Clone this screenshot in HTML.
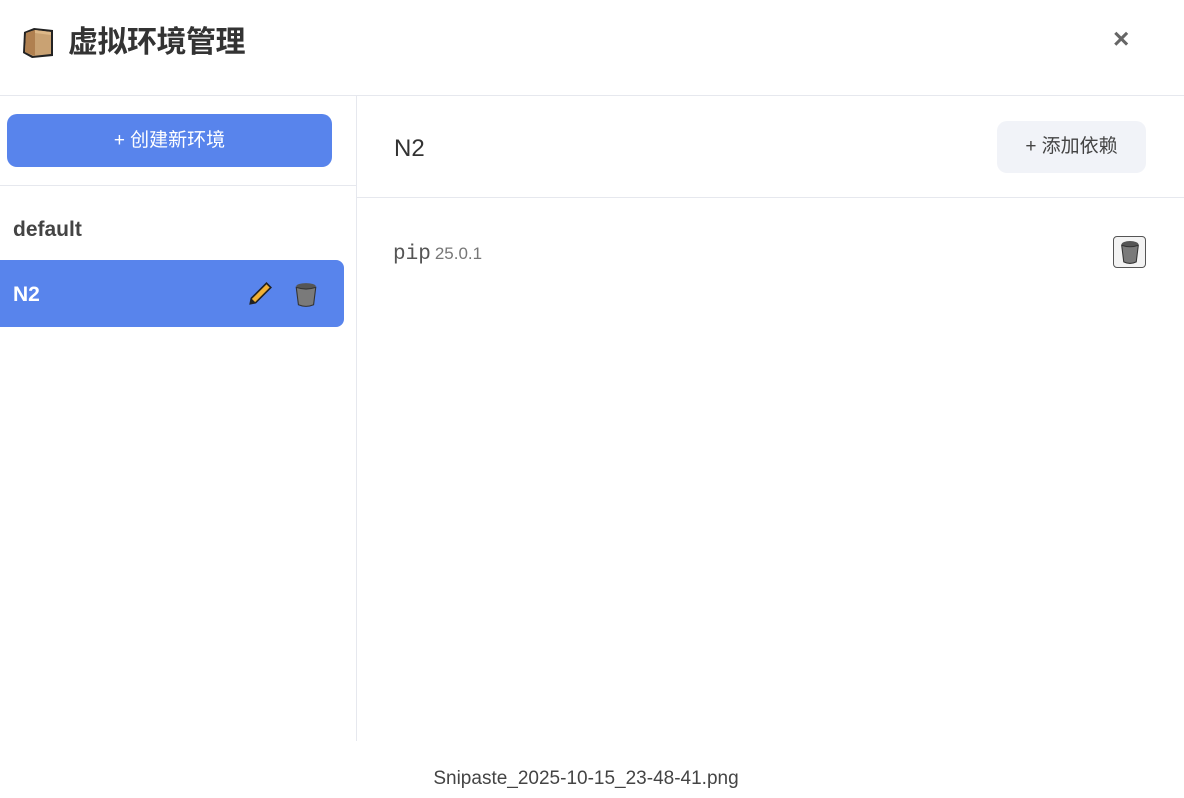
<!DOCTYPE html>
<html><head><meta charset="utf-8"><style>
*{box-sizing:border-box;margin:0;padding:0}
body{width:1184px;height:798px;background:#fff;position:relative;overflow:hidden;font-family:"Liberation Sans","Noto Sans CJK SC",sans-serif;color:#333}
.abs{position:absolute}
</style></head><body>
<div class="abs" style="left:20px;top:26px;width:36px;height:34px">
<svg width="36" height="34" viewBox="0 0 36 34"><path d="M4 6 L14 2 L33 4 L33 30 L12 32 L3 27 Z" fill="#222"/><path d="M6 7 L15 4 L31 6 L31 28 L13 30 L5 26Z" fill="#c9a273"/><path d="M6 7 L15 4 L15 30 L5 26Z" fill="#b08050"/><path d="M15 4 L31 6 L31 9 L15 7Z" fill="#ddb888"/></svg></div>
<div class="abs" style="left:68px;top:23px;font-size:30px;font-weight:bold;color:#333;line-height:40px;letter-spacing:-0.5px">虚拟环境管理</div>
<div class="abs" style="left:1113px;top:24px;font-size:28px;font-weight:bold;color:#666;line-height:30px">×</div>
<div class="abs" style="left:0;top:95px;width:1184px;height:1px;background:#e6e8ee"></div>
<div class="abs" style="left:356px;top:96px;width:1px;height:645px;background:#e6e8ee"></div>
<div class="abs" style="left:7px;top:114px;width:325px;height:53px;background:#5884ec;border-radius:10px;color:#fff;font-size:19px;text-align:center;line-height:53px">+ 创建新环境</div>
<div class="abs" style="left:0;top:185px;width:356px;height:1px;background:#e6e8ee"></div>
<div class="abs" style="left:13px;top:216px;font-size:21px;font-weight:bold;color:#444;line-height:28px">default</div>
<div class="abs" style="left:0;top:260px;width:344px;height:67px;background:#5884ec;border-radius:0 8px 8px 0"></div>
<div class="abs" style="left:13px;top:281px;font-size:21px;font-weight:bold;color:#fff;line-height:28px">N2</div>
<svg class="abs" style="left:247px;top:281px" width="26" height="26" viewBox="0 0 24 24"><path d="M3 21 L4 16 L18 2 L22 6 L8 20 Z" fill="#f2b134" stroke="#222" stroke-width="1.5"/><path d="M3 21 L4 16 L8 20Z" fill="#222"/></svg>
<svg class="abs" style="left:294px;top:282px" width="24" height="26" viewBox="0 0 22 24"><ellipse cx="11" cy="4" rx="9" ry="3" fill="#555"/><path d="M2 5 L4 21 Q11 24 18 21 L20 5 Q11 8 2 5Z" fill="#7a7a7a" stroke="#333"/></svg>
<div class="abs" style="left:394px;top:134px;font-size:24px;color:#333;line-height:30px">N2</div>
<div class="abs" style="left:997px;top:121px;width:149px;height:52px;background:#f1f3f8;border-radius:10px;font-size:19px;color:#444;text-align:center;line-height:52px">+ 添加依赖</div>
<div class="abs" style="left:357px;top:197px;width:827px;height:1px;background:#e6e8ee"></div>
<div class="abs" style="left:393px;top:241px;font-family:'Liberation Mono',monospace;font-size:21px;color:#555;line-height:26px">pip<span style="font-family:'Liberation Sans',sans-serif;font-size:17px;color:#777;margin-left:4px">25.0.1</span></div>
<div class="abs" style="left:1113px;top:236px;width:33px;height:32px;border:1px solid #555;border-radius:4px;background:#f3f3f3"></div>
<svg class="abs" style="left:1118px;top:240px" width="24" height="25" viewBox="0 0 22 24"><ellipse cx="11" cy="4" rx="8" ry="3" fill="#555"/><path d="M3 5 L5 21 Q11 24 17 21 L19 5 Q11 8 3 5Z" fill="#7a7a7a" stroke="#333"/></svg>
<div class="abs" style="left:0;top:766px;width:1172px;text-align:center;font-size:19px;color:#444;line-height:26px">Snipaste_2025-10-15_23-48-41.png</div>
</body></html>
